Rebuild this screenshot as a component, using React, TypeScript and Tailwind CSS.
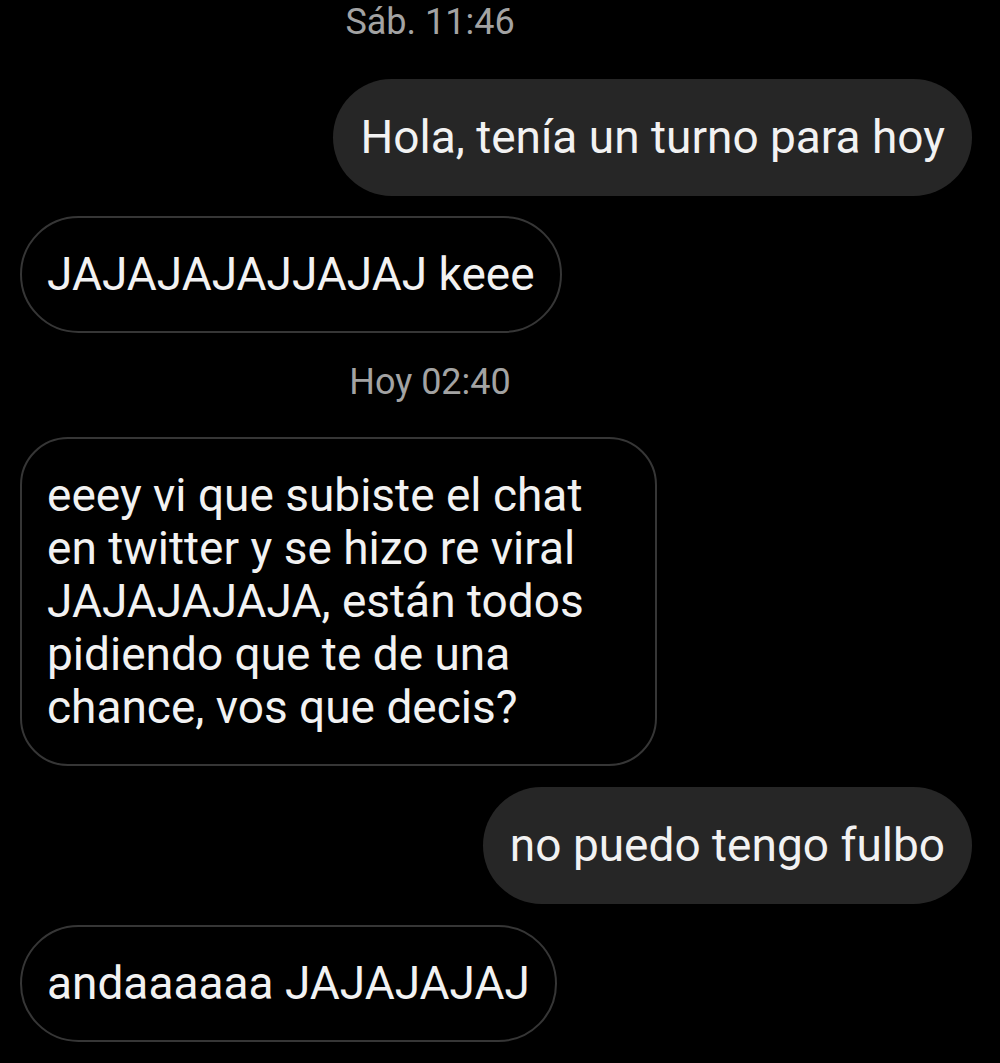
import React from 'react';

type Msg =
  | { kind: 'time'; text: string; mt: string }
  | { kind: 'sent'; lines: string[]; mt: string }
  | { kind: 'recv'; lines: string[]; mt: string; w?: string };

const messages: Msg[] = [
  { kind: 'time', text: 'Sáb. 11:46', mt: 'mt-0' },
  { kind: 'sent', lines: ['Hola, tenía un turno para hoy'], mt: 'mt-[35px]' },
  { kind: 'recv', lines: ['JAJAJAJAJJAJAJ keee'], mt: 'mt-[20px]' },
  { kind: 'time', text: 'Hoy 02:40', mt: 'mt-[27px]' },
  {
    kind: 'recv',
    lines: [
      'eeey vi que subiste el chat',
      'en twitter y se hizo re viral',
      'JAJAJAJAJA, están todos',
      'pidiendo que te de una',
      'chance, vos que decis?',
    ],
    mt: 'mt-[33px]',
    w: 'w-[637px]',
  },
  { kind: 'sent', lines: ['no puedo tengo fulbo'], mt: 'mt-[21px]' },
  { kind: 'recv', lines: ['andaaaaaa JAJAJAJAJ'], mt: 'mt-[21px]' },
];

const Bubble: React.FC<{ lines: string[]; sent: boolean; w?: string }> = ({ lines, sent, w }) => {
  const multi = lines.length > 1;
  return (
    <div
      className={
        'text-[46px] leading-[53px] text-[#f2f2f2] ' +
        (w ? w + ' ' : '') +
        (multi ? 'rounded-[48px] ' : 'rounded-full ') +
        (sent
          ? 'bg-[#262626] py-8 pl-[27px] pr-[27px]'
          : 'border-2 border-[#363636] bg-black py-[30px] pl-[25px] pr-[25px]')
      }
    >
      {lines.map((l) => (
        <div key={l} className="whitespace-nowrap">
          {l}
        </div>
      ))}
    </div>
  );
};

export default function App() {
  return (
    <div className="min-h-[1063px] w-[1000px] overflow-hidden bg-black font-['Roboto',sans-serif]">
      <div className="flex flex-col pl-[20px] pr-[28px]">
        {messages.map((m, i) =>
          m.kind === 'time' ? (
            <div
              key={i}
              className={`${m.mt} w-[820px] text-center text-[36px] leading-[44px] text-[#a3a3a3]`}
            >
              {m.text}
            </div>
          ) : (
            <div
              key={i}
              className={`${m.mt} flex ${m.kind === 'sent' ? 'justify-end' : 'justify-start'}`}
            >
              <Bubble
                lines={m.lines}
                sent={m.kind === 'sent'}
                w={m.kind === 'recv' ? m.w : undefined}
              />
            </div>
          ),
        )}
      </div>
    </div>
  );
}
